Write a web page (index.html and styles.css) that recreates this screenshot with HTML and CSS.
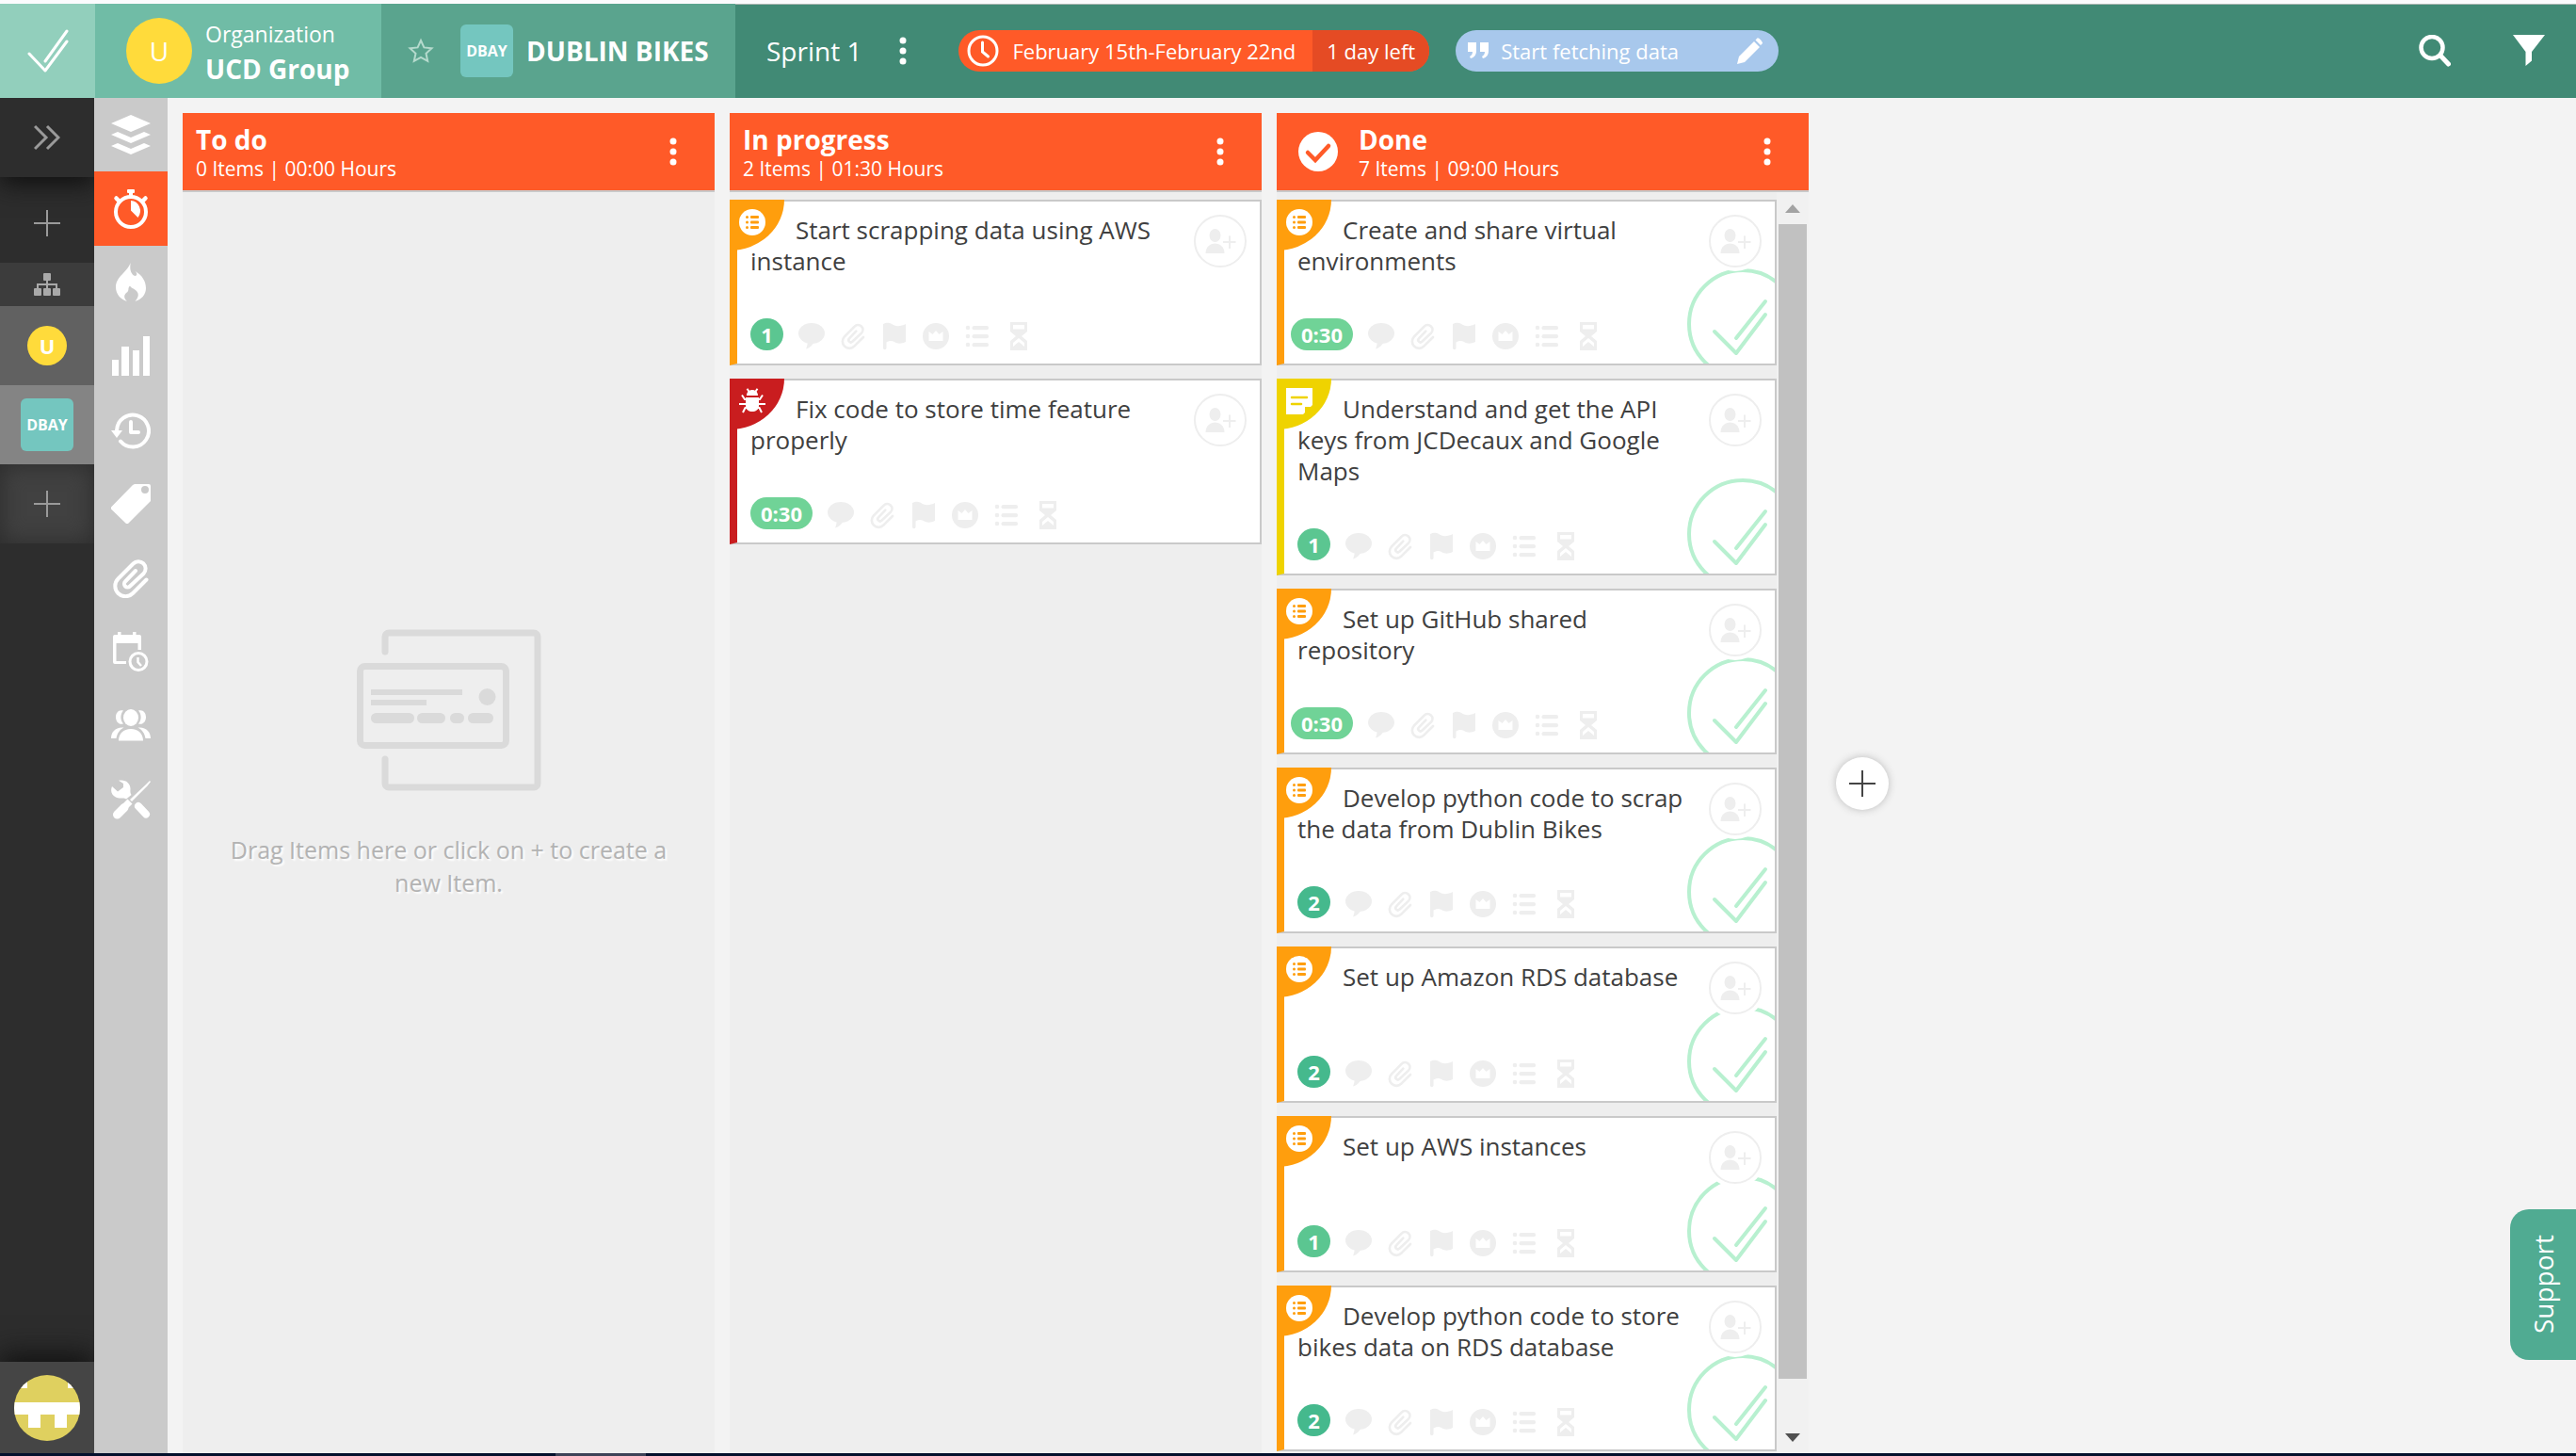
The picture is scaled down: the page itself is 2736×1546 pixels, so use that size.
FILE: index.html
```html
<!DOCTYPE html>
<html lang="en">
<head>
<meta charset="utf-8">
<title>DUBLIN BIKES - Sprint 1</title>
<link rel="stylesheet" href="styles.css">
</head>
<body>
<svg class="sprite" aria-hidden="true">
  <symbol id="i-dots" viewBox="0 0 8 30"><circle cx="4" cy="4" r="3.500"/><circle cx="4" cy="15" r="3.500"/><circle cx="4" cy="26" r="3.500"/></symbol>
  <symbol id="i-plus" viewBox="0 0 28 28"><path d="M13 0h2v13h13v2H15v13h-2V15H0v-2h13z"/></symbol>
  <symbol id="i-clip" viewBox="0 0 42 42"><path d="M37.500 22.500L23 37A10.800 10.800 0 0 1 7.500 21.500L23.500 5.500A7.500 7.500 0 0 1 34.500 16L20 29.500A3.500 3.500 0 0 1 15 24.500L26 13" fill="none" stroke="currentColor" stroke-width="4" stroke-linecap="round"/></symbol>
  <symbol id="i-comment" viewBox="0 0 28 30"><ellipse cx="14" cy="12" rx="14" ry="11"/><path d="M9.500 20c.5 4-.5 6-1.500 8.500 4-1 7-4 8.500-7z"/></symbol>
  <symbol id="i-flag" viewBox="0 0 28 30"><path d="M2 2C8-1 11 2 14 3.500C18 5 22 4 26 2V21C21 23.500 17 23 14 21C11 19.500 8 20 5.500 21.500V27.500a1.700 1.700 0 0 1-3.500 0z"/></symbol>
  <symbol id="i-crown" viewBox="0 0 28 30"><path fill-rule="evenodd" d="M14 1a14 14 0 1 0 0 28a14 14 0 1 0 0-28zM6.500 10l4 3 3.500-4 3.500 4 4-3v10h-15z"/></symbol>
  <symbol id="i-list" viewBox="0 0 28 30"><circle cx="4" cy="6" r="2.300"/><circle cx="4" cy="15" r="2.300"/><circle cx="4" cy="24" r="2.300"/><rect x="8.500" y="4" width="17.500" height="4.200" rx="2"/><rect x="8.500" y="13" width="17.500" height="4.200" rx="2"/><rect x="8.500" y="22" width="17.500" height="4.200" rx="2"/></symbol>
  <symbol id="i-hourglass" viewBox="0 0 28 30"><path fill-rule="evenodd" d="M5 0h18v10l-6 5 6 5v10H5V20l6-5-6-5zM8 3v4.500h12V3zM14 17l-6 5v4l6-5 6 5v-4z"/></symbol>
  <symbol id="i-task" viewBox="0 0 28 28"><circle cx="14" cy="14" r="14" fill="#fff"/><g fill="#ff9e0d"><circle cx="8.500" cy="8.500" r="1.500"/><circle cx="8.500" cy="14" r="1.500"/><circle cx="8.500" cy="19.500" r="1.500"/><rect x="12" y="7" width="9" height="3" rx="1"/><rect x="12" y="12.500" width="9" height="3" rx="1"/><rect x="12" y="18" width="9" height="3" rx="1"/></g></symbol>
  <symbol id="i-note" viewBox="0 0 28 28"><path fill="#fff" d="M0 0h28v18l-2 2h-6v6l-2 2H0z"/><path d="M6 10h16M6 17h10" stroke="#efd300" stroke-width="2.500" stroke-linecap="round"/></symbol>
  <symbol id="i-bug" viewBox="0 0 28 28"><path fill="#fff" d="M8 8c0-8 12-8 12 0zM7 10h14v9c0 8-14 8-14 0z"/><path d="M8.500.8l2 3M19.500.8l-2 3M3 7.500l3 4.500h2M25 7.500L22 12h-2M0 17h28M4 26l2.500-5H9M24 26l-2.500-5H19" fill="none" stroke="#fff" stroke-width="2"/></symbol>
  <symbol id="i-adduser" viewBox="0 0 34 28"><ellipse cx="11.500" cy="8" rx="6" ry="7"/><path d="M1.500 27c0-14 20-14 20 0z"/><path d="M26 8.500h2v5.500h5.500v2H28v6h-2v-6h-6v-2h6z"/></symbol>
  <symbol id="i-done" viewBox="0 0 94 103"><g fill="none" stroke="#b8f0d0" stroke-width="4" stroke-linecap="round" stroke-linejoin="round"><circle cx="60" cy="61" r="57"/><path d="M30 69l23 23L84 51M53 76L84 37"/></g></symbol>
</svg>

<header class="topbar">
  <a class="logo" href="#" aria-label="Home"><svg width="44" height="46" viewBox="0 0 44 46" fill="none" stroke="#fff" stroke-width="3" stroke-linecap="round" stroke-linejoin="round"><path d="M2 26l17 18L42 13M19 34L42 2"/></svg></a>
  <a class="org" href="#">
    <span class="org-avatar">U</span>
    <span class="org-text"><span class="org-label">Organization</span><strong>UCD Group</strong></span>
  </a>
  <div class="project">
    <button class="plain" aria-label="Add to favourites"><svg width="28" height="28" viewBox="0 0 28 28" fill="none" stroke="#b5dacd" stroke-width="2"><path d="M14 3l3.400 7.400 8.100.9-6 5.500 1.700 8L14 20.800 6.800 24.800l1.700-8-6-5.500 8.100-.9z"/></svg></button>
    <span class="tile">DBAY</span>
    <strong>DUBLIN BIKES</strong>
  </div>
  <div class="sprint">
    <span class="sprint-name">Sprint 1</span>
    <button class="plain sprint-menu" aria-label="Sprint menu"><svg width="8" height="30"><use href="#i-dots"/></svg></button>
    <button class="dates"><span class="range"><svg width="34" height="34" viewBox="0 0 34 34" fill="none" stroke="#fff" stroke-width="3" stroke-linecap="round"><circle cx="17" cy="17" r="15"/><path d="M16.500 8v10l6 5"/></svg>February 15th-February 22nd</span><span class="left">1 day left</span></button>
    <button class="goal"><svg width="24" height="18" viewBox="0 0 24 18" fill="#fff"><path d="M1 0h9v9c0 4-2 7-6 8l-1-2c2-1 3-3 3-5H1zM14 0h9v9c0 4-2 7-6 8l-1-2c2-1 3-3 3-5h-5z"/></svg><span>Start fetching data</span><svg class="pencil" width="28" height="28" viewBox="0 0 28 28" fill="#fff"><path d="M0 28l2-8L18 4l6 6L8 26zM19.500 2.500l2-2c1-1 6 4 5.500 5.500l-2 2z"/></svg></button>
  </div>
  <div class="actions">
    <button class="plain" aria-label="Search"><svg width="34" height="34" viewBox="0 0 34 34" fill="none" stroke="#fff" stroke-linecap="round"><circle cx="14" cy="13.500" r="11.500" stroke-width="4.500"/><path d="M23 22l8.500 9" stroke-width="5"/></svg></button>
    <button class="plain" aria-label="Filter"><svg width="34" height="34" viewBox="0 0 34 34" fill="#fff"><path d="M0 0h34L20 18v9.500L13.500 33V18z"/></svg></button>
  </div>
</header>

<div class="shell">
  <aside class="rail">
    <button class="rail-expand" aria-label="Expand"><svg width="28" height="28" viewBox="0 0 28 28" fill="none" stroke="#9a9a9a" stroke-width="3"><path d="M1 2l12 12L1 26M14 2l12 12-12 12"/></svg></button>
    <button class="rail-add" aria-label="Add organization"><svg width="28" height="28"><use href="#i-plus"/></svg></button>
    <button class="rail-tree" aria-label="Organization tree"><svg width="28" height="24" viewBox="0 0 28 24" fill="#a9a9a9"><rect x="10" width="8" height="8" rx="1"/><rect y="16" width="8" height="8" rx="1"/><rect x="10" y="16" width="8" height="8" rx="1"/><rect x="20" y="16" width="8" height="8" rx="1"/><path d="M4 17v-5h20v5M14 7v10" fill="none" stroke="#a9a9a9" stroke-width="2"/></svg></button>
    <a class="rail-org" href="#"><span>U</span></a>
    <a class="rail-project" href="#"><span class="tile">DBAY</span></a>
    <button class="rail-new" aria-label="Add project"><svg width="28" height="28"><use href="#i-plus"/></svg></button>
    <a class="rail-user" href="#" aria-label="Profile"><svg width="70" height="70" viewBox="0 0 70 70"><clipPath id="round"><circle cx="35" cy="35" r="35"/></clipPath><g clip-path="url(#round)"><path fill="#dfd05f" d="M0 0h70v70H0z"/><path fill="#fff" d="M0 29h70v13H56v14H43V42H28v14H15V42H0zM0 0h14v14H0zM57 0h13v14H57z"/></g></svg></a>
  </aside>

  <nav class="modules" aria-label="Modules">
    <a href="#" aria-label="Backlog"><svg viewBox="0 0 42 42"><path d="M21 0l21 9-21 9L0 9zM0 21l7-3 14 6 14-6 7 3-21 9zM0 33l7-3 14 6 14-6 7 3-21 9z"/></svg></a>
    <a href="#" class="current" aria-label="Sprint board"><svg viewBox="0 0 42 42"><path d="M18 0h6a1 1 0 0 1 1 1v2a1 1 0 0 1-1 1h-1v4h-4V4h-1a1 1 0 0 1-1-1V1a1 1 0 0 1 1-1zM21 12A10.500 11 0 0 1 28.500 30L21 22.500z"/><circle cx="21" cy="24" r="16" fill="none" stroke="#fff" stroke-width="4"/><path d="M5.500 9.500l3 3M36.500 9.500l-3 3" stroke="#fff" stroke-width="4.500" stroke-linecap="round"/></svg></a>
    <a href="#" aria-label="Burndown"><svg viewBox="0 0 42 42"><path d="M20.700 0C19.500 7 21 11 24 13.500C27 15 29 12 25.500 9C33 13 37 20 37 27C37 34 32 39 25.500 41C29 37 30 33 27 30C25 27.500 21 27 20 24.500C17 27 20 30 16 32C13 35 14 38 17 41C10 39 5 33 5 26C5 15 17 10 20.700 0z"/></svg></a>
    <a href="#" aria-label="Reports"><svg viewBox="0 0 42 42"><path d="M1 25h7v17H1zM11 11h8v31h-8zM23 15h7v27h-7zM34 0h7v42h-7z"/></svg></a>
    <a href="#" aria-label="History"><svg viewBox="0 0 42 42"><path d="M0 21h12l-6 8z"/><path d="M6 21A17 17 0 1 1 10 32.500M21 12v11h8" fill="none" stroke="#fff" stroke-width="4" stroke-linecap="round" stroke-linejoin="round"/></svg></a>
    <a href="#" aria-label="Tags"><svg viewBox="0 0 42 42"><path fill-rule="evenodd" d="M25 0h15a2 2 0 0 1 2 2v16L18.500 41.500a2 2 0 0 1-3 0L.5 27a2 2 0 0 1 0-3L23 1zM36 2a4 4 0 1 0 0 8a4 4 0 1 0 0-8z"/></svg></a>
    <a href="#" aria-label="Attachments"><svg><use href="#i-clip"/></svg></a>
    <a href="#" aria-label="Schedule"><svg viewBox="0 0 42 42"><path d="M7 0h3.500v4H7zM23 0h3.500v4H23zM4 3h26a2 2 0 0 1 2 2v14h-3.500v-7H5.500v19H16v3H4a2 2 0 0 1-2-2V5a2 2 0 0 1 2-2z"/><circle cx="29" cy="31.500" r="9" fill="none" stroke="#fff" stroke-width="3"/><path d="M28.500 27v5l3.500 4" fill="none" stroke="#fff" stroke-width="2.500"/></svg></a>
    <a href="#" aria-label="Team"><svg viewBox="0 0 42 42"><ellipse cx="21" cy="13" rx="8" ry="9"/><path d="M8 37.500C8 30 13 25 21 25S34 30 34 37.500zM13 5.500C8 4 5 8 5 12.500S8 21 13 19.500C9.500 15.500 9.500 9.500 13 5.500zM29 5.500C34 4 37 8 37 12.500S34 21 29 19.500C32.500 15.500 32.500 9.500 29 5.500zM0 35C0 28 5 22.500 13.500 23.500C9 26 6.500 29.500 5.500 35zM42 35C42 28 37 22.500 28.500 23.500C33 26 35.500 29.500 36.500 35z"/></svg></a>
    <a href="#" aria-label="Settings"><svg viewBox="0 0 42 42"><path d="M1 7l6 5.500 6-4.500V4L8 .8C15-.8 20 3 20.500 9c0 3-.5 4.500 1 7l-5.500 4.500C13 18 10 21 5 18.500C0 16-.8 11 1 7zM37 5l4-4 1 1-3.500 4.500L22 23l-2-2z"/><path d="M6.500 37L14 29.500" stroke="#fff" stroke-width="9" stroke-linecap="round"/><path d="M15 28l5-5" stroke="#fff" stroke-width="7"/><path d="M29 28l8 8.500" stroke="#fff" stroke-width="8" stroke-linecap="round"/></svg></a>
  </nav>

  <main class="board">
    <section class="column">
      <header class="column-head"><div class="column-title"><h2>To do</h2><p>0 Items | 00:00 Hours</p></div><button class="plain" aria-label="Column menu"><svg width="8" height="30"><use href="#i-dots"/></svg></button></header>
      <div class="empty">
        <svg width="196" height="172" viewBox="0 0 196 172" fill="none" stroke="#dadada" stroke-width="7" stroke-linecap="round"><path d="M30 24V8a4 4 0 0 1 4-4h154a4 4 0 0 1 4 4v156a4 4 0 0 1-4 4H34a4 4 0 0 1-4-4v-26"/><rect x="3.500" y="39.500" width="155" height="84" rx="5"/><g fill="#dadada" stroke="none"><path d="M15 64h97v6H15zM15 75h59v6H15z"/><circle cx="138.500" cy="72" r="9"/><rect x="15" y="89" width="46" height="11" rx="5.500"/><rect x="64" y="89" width="30" height="11" rx="5.500"/><rect x="99" y="89" width="15" height="11" rx="5.500"/><rect x="118" y="89" width="27" height="11" rx="5.500"/></g></svg>
        <p>Drag Items here or click on + to create a new Item.</p>
      </div>
    </section>
    <section class="column">
      <header class="column-head"><div class="column-title"><h2>In progress</h2><p>2 Items | 01:30 Hours</p></div><button class="plain" aria-label="Column menu"><svg width="8" height="30"><use href="#i-dots"/></svg></button></header>
      <div class="cards" id="in-progress"></div>
    </section>
    <section class="column">
      <header class="column-head"><svg class="head-check" width="42" height="42" viewBox="0 0 42 42"><circle cx="21" cy="21" r="21" fill="#fff"/><path d="M10 22l8 8 14-15" fill="none" stroke="#ff5a28" stroke-width="4.500" stroke-linecap="round"/></svg><div class="column-title"><h2>Done</h2><p>7 Items | 09:00 Hours</p></div><button class="plain" aria-label="Column menu"><svg width="8" height="30"><use href="#i-dots"/></svg></button></header>
      <div class="scroller">
        <div class="cards done" id="done"></div>
        <div class="scrollbar"><span class="arrow up"></span><div class="track"><div class="thumb"></div></div><span class="arrow down"></span></div>
      </div>
    </section>
    <button class="add-column" aria-label="Add column"><svg width="28" height="28"><use href="#i-plus"/></svg></button>
  </main>
</div>
<div class="taskbar"><span></span></div>
<button class="support"><span>Support</span></button>
<script src="app.js"></script>
</body>
</html>
```

FILE: styles.css
```css
* { box-sizing: border-box; }
body {
  margin: 0;
  height: 100vh;
  display: flex;
  flex-direction: column;
  overflow: hidden;
  background: #f3f3f3;
  color: #404040;
  font-family: "Open Sans", "Liberation Sans", sans-serif;
  font-size: 22px;
}
h2, p { margin: 0; }
a { color: inherit; text-decoration: none; }
button { border: 0; padding: 0; font: inherit; color: inherit; background: none; cursor: pointer; }
svg { display: block; flex: none; }
svg:not([fill]) { fill: currentColor; }
.sprite { position: absolute; width: 0; height: 0; }
.plain { display: flex; align-items: center; justify-content: center; }

/* Top bar */
.topbar {
  flex: none;
  display: flex;
  height: 104px;
  border-top: 4px solid #fbfbfd;
  box-shadow: inset 0 1px #a9b5b1;
  background: #418a75;
  color: #fff;
}
.logo { width: 101px; background: #92cfbc; display: flex; align-items: center; justify-content: center; }
.org { width: 304px; padding-left: 33px; display: flex; align-items: center; gap: 14px; background: #70bca6; }
.org-avatar { width: 70px; height: 70px; border-radius: 50%; background: #ffdb3b; display: flex; align-items: center; justify-content: center; font-size: 28px; }
.org-text { display: flex; flex-direction: column; padding-top: 2px; }
.org-label { font-size: 23px; line-height: 36px; }
.org strong { font-size: 28px; line-height: 38px; }
.project { width: 376px; padding-left: 28px; display: flex; align-items: center; gap: 14px; background: #5aa48e; font-size: 28px; }
.project .plain { margin-right: 14px; }
.tile { width: 56px; height: 56px; border-radius: 6px; background: #74c6bf; color: #fff; font-size: 16px; font-weight: 700; display: flex; align-items: center; justify-content: center; }
.sprint { flex: 1; display: flex; align-items: center; padding-left: 33px; }
.sprint-name { font-size: 28px; }
.sprint-menu { width: 30px; height: 44px; margin: 0 44px 0 29px; }
.dates { display: flex; height: 44px; border-radius: 22px; overflow: hidden; background: #ff5a28; }
.range { display: flex; align-items: center; gap: 14px; padding: 0 18px 0 9px; }
.left { display: flex; align-items: center; padding: 0 15px; background: #e54b24; }
.goal { display: flex; align-items: center; gap: 12px; width: 343px; height: 44px; margin-left: 28px; padding: 0 16px 0 12px; border-radius: 22px; background: #a8c8ec; }
.pencil { margin-left: auto; }
.actions { display: flex; gap: 66px; padding-right: 33px; }

/* Dark rail */
.shell { flex: 1; min-height: 0; display: flex; }
.rail { width: 100px; display: flex; flex-direction: column; background: #2d2d2d; color: #9a9a9a; overflow: hidden; }
.rail > * { flex: none; height: 84px; display: flex; align-items: center; justify-content: center; }
.rail .rail-expand { background: #2d2d2d; box-shadow: 0 8px 24px #111; }
.rail .rail-add { height: 91px; padding-top: 6px; }
.rail .rail-tree { height: 46px; background: #3c3c3c; }
.rail-org { background: #616161; }
.rail-org span { width: 42px; height: 42px; border-radius: 50%; background: #ffdb3b; color: #fff; font-weight: 700; line-height: 42px; text-align: center; }
.rail-project { background: #848484; }
.rail-new { background: #414141; box-shadow: inset 0 0 24px #2b2b2b; }
.rail .rail-user { height: 97px; margin-top: auto; background: #454545; box-shadow: 0 -8px 28px #111; }

/* Module nav */
.modules {
  width: 78px;
  background: #cacaca;
  color: #fff;
  display: grid;
  grid-template-rows: repeat(10, 1fr);
  padding-bottom: 655px;
}
.modules a { display: flex; align-items: center; justify-content: center; }
.modules svg { width: 42px; height: 42px; }
.modules .current { background: #ff5a28; }

/* Board */
.board { flex: 1; min-width: 0; display: flex; gap: 16px; padding: 16px 16px 0; }
.column { flex: none; width: 565px; display: flex; flex-direction: column; background: #eee; }
.column-head { flex: none; display: flex; align-items: center; height: 84px; padding: 0 40px 0 14px; background: #ff5a28; border-bottom: 2px solid #c9c9c9; color: #fff; }
.head-check { margin: 0 22px 0 9px; }
.column-title { flex: 1; padding-top: 2px; }
.column-title h2 { font-size: 28px; line-height: 34px; }
.column-title p { font-size: 21px; line-height: 28px; }
.empty { flex: 1; display: flex; flex-direction: column; align-items: center; gap: 45px; padding: 464px 40px 0; text-align: center; }
.empty p { font-size: 25px; line-height: 35px; color: #b3b3b3; text-shadow: 2px 2px 2px #fff; }
.cards { flex: 1; min-height: 0; display: flex; flex-direction: column; gap: 14px; padding-top: 8px; overflow: hidden; }

.card { position: relative; flex: none; display: flex; flex-direction: column; border: 2px solid #c9c9c9; border-left: 8px solid #ff9e0d; background: #fff; padding: 14px; }
.card.note { border-left-color: #efd300; }
.card.bug { border-left-color: #c91d1f; }
.card h3 { margin: 0; min-height: 56px; padding-right: 80px; font-size: 26px; font-weight: 400; line-height: 33px; text-indent: 48px; }
.kind { position: absolute; left: -8px; top: -2px; width: 58px; height: 54px; padding: 10px; border-bottom-right-radius: 100%; background: #ff9e0d; }
.note .kind { background: #efd300; }
.bug .kind { background: #c91d1f; }
.assign { position: absolute; z-index: 1; top: 14px; right: 14px; width: 56px; height: 56px; border: 2px solid #eee; border-radius: 50%; background: #fff; color: #eee; box-shadow: 0 0 0 4px #fff; display: flex; align-items: center; justify-content: center; }
.stamp { position: absolute; right: 0; bottom: 0; }
.meta { display: flex; align-items: flex-end; gap: 16px; margin-top: 44px; color: #eee; }
.effort { flex: none; min-width: 35px; height: 34px; padding: 0 11px; border-radius: 17px; color: #fff; font-size: 22px; font-weight: 700; line-height: 34px; text-align: center; }
.e30 { background: #70d397; }
.e1 { background: #5bc691; }
.e2 { background: #45b98d; }
.done .e30 { margin-left: -7px; }

.scroller { flex: 1; min-height: 0; display: flex; }
.scrollbar { width: 34px; padding: 0 2px; display: flex; flex-direction: column; background: #f1f1f1; }
.track { flex: 1; }
.thumb { height: calc(100% - 45px); background: #c1c1c1; }
.arrow { height: 34px; display: flex; align-items: center; justify-content: center; }
.arrow::before { content: ""; border: 8px solid transparent; border-top-width: 0; border-bottom: 9px solid #a3a3a3; }
.arrow.down::before { border-bottom: 0; border-top: 9px solid #505050; }
.add-column { flex: none; align-self: flex-start; margin: 684px 0 0 13px; width: 56px; height: 56px; border-radius: 50%; background: #fff; color: #444; box-shadow: 0 0 8px #bbb; display: flex; align-items: center; justify-content: center; }

.taskbar { flex: none; height: 3px; background: #03102c; }
.taskbar span { display: block; width: 96px; height: 3px; margin-left: 590px; background: #3d4257; }
.support { position: absolute; right: 0; bottom: 102px; width: 70px; height: 160px; border-radius: 20px 0 0 20px; background: #50ab92; color: #fff; font-size: 28px; display: flex; align-items: center; justify-content: center; }
.support span { writing-mode: vertical-rl; transform: rotate(180deg); }
```

FILE: app.js
```js
const columns = {
  'in-progress': [
    ['task', 'Start scrapping data using AWS instance', '1'],
    ['bug', 'Fix code to store time feature properly', '0:30'],
  ],
  'done': [
    ['task', 'Create and share virtual environments', '0:30'],
    ['note', 'Understand and get the API keys from JCDecaux and Google Maps', '1'],
    ['task', 'Set up GitHub shared repository', '0:30'],
    ['task', 'Develop python code to scrap the data from Dublin Bikes', '2'],
    ['task', 'Set up Amazon RDS database', '2'],
    ['task', 'Set up AWS instances', '1'],
    ['task', 'Develop python code to store bikes data on RDS database', '2'],
  ],
};
const tools = [['comment', 'Comments'], ['clip', 'Attachments'], ['flag', 'Priority'], ['crown', 'Epic'], ['list', 'Checklist'], ['hourglass', 'Log hours']];
const effortClass = { '0:30': 'e30', '1': 'e1', '2': 'e2' };
const icon = (name, w, h, cls = '') => `<svg class="${cls}" width="${w}" height="${h}"><use href="#i-${name}"/></svg>`;

for (const [id, cards] of Object.entries(columns)) {
  document.getElementById(id).innerHTML = cards.map(([kind, title, effort]) => `
    <article class="card ${kind}">
      <span class="kind">${icon(kind, 28, 28)}</span>
      <h3>${title}</h3>
      <button class="assign" aria-label="Assign user">${icon('adduser', 34, 28)}</button>
      <div class="meta">
        <span class="effort ${effortClass[effort]}">${effort}</span>
        ${tools.map(([name, label]) => `<button aria-label="${label}">${icon(name, 28, 30)}</button>`).join('')}
      </div>
      ${id === 'done' ? icon('done', 94, 103, 'stamp') : ''}
    </article>`).join('');
}
```
